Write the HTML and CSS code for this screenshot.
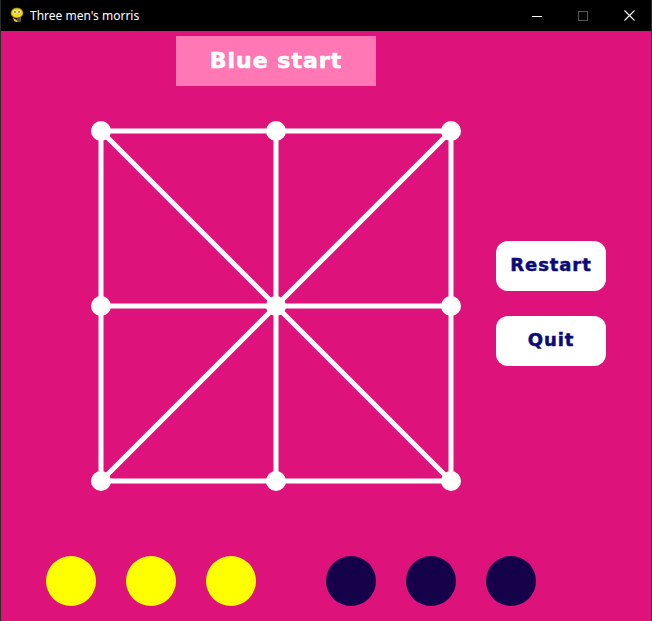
FILE: index.html
```html
<!DOCTYPE html>
<html>
<head>
<meta charset="utf-8">
<title>Three men's morris</title>
<link rel="stylesheet" href="styles.css">
</head>
<body>
<div class="window">
  <div class="titlebar">
    <svg class="app-icon" width="16" height="16" viewBox="0 0 16 16">
      <ellipse cx="8" cy="6" rx="6" ry="5" fill="#f2d71c"/>
      <ellipse cx="8" cy="6" rx="6" ry="5" fill="none" stroke="#8a7a10" stroke-width="0.8"/>
      <circle cx="6" cy="5" r="1.6" fill="#fff"/>
      <circle cx="10" cy="5" r="1.6" fill="#fff"/>
      <circle cx="6" cy="5" r="0.8" fill="#111"/>
      <circle cx="10" cy="5" r="0.8" fill="#111"/>
      <path d="M4 10 Q8 16 12 10 L11 14 Q8 16 5 14 Z" fill="#e6c817"/>
      <circle cx="10" cy="13" r="2.2" fill="#555"/>
    </svg>
    <span class="title">Three men's morris</span>
    <div class="controls">
      <span class="ctl min"><svg width="10" height="10" viewBox="0 0 10 10"><line x1="0" y1="5.5" x2="10" y2="5.5" stroke="#fff" stroke-width="1"/></svg></span>
      <span class="ctl max"><svg width="10" height="10" viewBox="0 0 10 10"><rect x="0.5" y="0.5" width="9" height="9" fill="none" stroke="#555" stroke-width="1"/></svg></span>
      <span class="ctl close"><svg width="11" height="11" viewBox="0 0 11 11"><path d="M0.5 0.5 L10.5 10.5 M10.5 0.5 L0.5 10.5" stroke="#fff" stroke-width="1.1"/></svg></span>
    </div>
  </div>
  <div class="client">
    <div class="banner">Blue start</div>
    <div class="main">
      <svg class="board" width="370" height="370" viewBox="0 0 370 370">
        <g stroke="#fff" stroke-width="5" fill="none">
          <rect x="10" y="10" width="350" height="350"/>
          <line x1="185" y1="10" x2="185" y2="360"/>
          <line x1="10" y1="185" x2="360" y2="185"/>
          <line x1="10" y1="10" x2="360" y2="360"/>
          <line x1="360" y1="10" x2="10" y2="360"/>
        </g>
        <g fill="#fff">
          <circle cx="10" cy="10" r="10"/>
          <circle cx="185" cy="10" r="10"/>
          <circle cx="360" cy="10" r="10"/>
          <circle cx="10" cy="185" r="10"/>
          <circle cx="185" cy="185" r="10"/>
          <circle cx="360" cy="185" r="10"/>
          <circle cx="10" cy="360" r="10"/>
          <circle cx="185" cy="360" r="10"/>
          <circle cx="360" cy="360" r="10"/>
        </g>
      </svg>
      <div class="buttons">
        <div class="btn">Restart</div>
        <div class="btn">Quit</div>
      </div>
    </div>
    <div class="pieces">
      <div class="group">
        <span class="piece yellow"></span>
        <span class="piece yellow"></span>
        <span class="piece yellow"></span>
      </div>
      <div class="group">
        <span class="piece dark"></span>
        <span class="piece dark"></span>
        <span class="piece dark"></span>
      </div>
    </div>
  </div>
</div>
</body>
</html>
```

FILE: styles.css
```css
html, body {
  margin: 0;
  padding: 0;
  background: #000;
}
.window {
  width: 650px;
  height: 621px;
  border-left: 1px solid #2b2b2b;
  border-right: 1px solid #2b2b2b;
  display: flex;
  flex-direction: column;
  overflow: hidden;
}
.titlebar {
  height: 31px;
  background: #000;
  display: flex;
  align-items: center;
  color: #fff;
  font-family: "Noto Sans", "Open Sans", sans-serif;
  font-size: 12px;
  flex-shrink: 0;
}
.app-icon {
  margin-left: 8px;
  margin-top: -1px;
}
.title {
  margin-left: 5px;
  margin-top: -1px;
}
.controls {
  margin-left: auto;
  display: flex;
  height: 31px;
}
.ctl {
  width: 46px;
  display: flex;
  align-items: center;
  justify-content: center;
}
.ctl.close {
  margin-right: -1px;
}
.client {
  flex: 1;
  background: #dd137b;
  display: flex;
  flex-direction: column;
}
.banner {
  margin: 5px 0 0 175px;
  width: 200px;
  height: 50px;
  background: #ff78b5;
  color: #fff;
  font-family: "DejaVu Sans", sans-serif;
  font-weight: bold;
  font-size: 22px;
  letter-spacing: 1px;
  -webkit-text-stroke: 0.6px #fff;
  display: flex;
  align-items: center;
  justify-content: center;
  padding-bottom: 2px;
  box-sizing: border-box;
}
.main {
  display: flex;
  margin-top: 35px;
}
.board {
  margin-left: 90px;
  display: block;
}
.buttons {
  margin-left: 35px;
  margin-top: 120px;
  display: flex;
  flex-direction: column;
  gap: 25px;
}
.btn {
  width: 110px;
  height: 50px;
  background: #fff;
  border-radius: 12px;
  color: #0b0b78;
  font-family: "DejaVu Sans", sans-serif;
  font-weight: bold;
  font-size: 18px;
  letter-spacing: 0.9px;
  -webkit-text-stroke: 0.5px #0b0b78;
  display: flex;
  align-items: center;
  justify-content: center;
  padding-bottom: 3px;
  box-sizing: border-box;
}
.pieces {
  display: flex;
  margin-top: 65px;
  padding-left: 45px;
  gap: 70px;
}
.group {
  display: flex;
  gap: 30px;
}
.piece {
  width: 50px;
  height: 50px;
  border-radius: 50%;
  display: block;
}
.yellow {
  background: #ffff00;
}
.dark {
  background: #15004a;
}
```
